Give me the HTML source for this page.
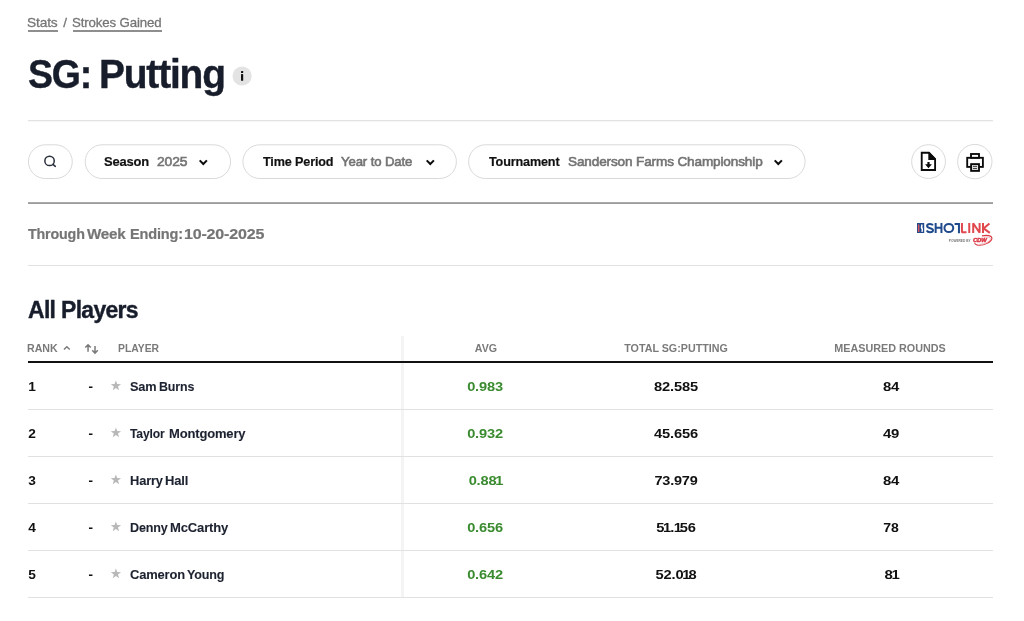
<!DOCTYPE html>
<html><head><meta charset="utf-8">
<style>
*{box-sizing:border-box;margin:0;padding:0}
html,body{width:1024px;height:621px;background:#fff;overflow:hidden}
body{font-family:"Liberation Sans",sans-serif;color:#0e1421;position:relative}
.abs{position:absolute;white-space:nowrap}
.t{position:absolute;white-space:nowrap}
.o{margin:0 -1.8px 0 -1px}.o2{margin:0 -.9px 0 -1px}.o3{margin:0 -1.8px 0 -.3px}
svg{position:absolute;overflow:visible}
.ul{position:absolute;height:2px;background:#8e8e8e;top:30px}
.hr{position:absolute;left:28px;width:964.7px;height:1px;background:#e2e2e3}
.pill{position:absolute;top:144px;height:35px;border:1px solid #d9d9d9;border-radius:18px;background:#fff}
.circ{position:absolute;top:144px;width:35.5px;height:35px;border:1px solid #d9d9d9;border-radius:50%}
.rl{position:absolute;left:28px;width:964.7px;height:1px;background:#e1e1e1}
</style></head><body><div style="position:absolute;left:0;top:0;width:1024px;height:621px;will-change:transform">




<svg style="left:232px;top:66px" width="20" height="20" viewBox="232 66 20 20"><circle cx="242.1" cy="76" r="9.6" fill="#e3e3e4"/><rect x="241" y="71.1" width="2.2" height="1.8" rx=".5" fill="#111"/><rect x="241" y="74.1" width="2.2" height="6.7" rx=".6" fill="#111"/></svg>
<div class="hr" style="top:120px"></div><div class="hr" style="top:121px;background:#f6f7f8"></div>

<svg style="left:20px;top:140px" width="800" height="45" viewBox="20 140 800 45"><g fill="#fff" stroke="#d9d9d9"><rect x="28.40" y="144.8" width="43.90" height="33.7" rx="16.85"/><rect x="85.20" y="144.8" width="145.40" height="33.7" rx="16.85"/><rect x="242.90" y="144.8" width="213.50" height="33.7" rx="16.85"/><rect x="468.60" y="144.8" width="336.50" height="33.7" rx="16.85"/></g></svg>
<svg style="left:40px;top:152px" width="20" height="20" viewBox="40 152 20 20"><circle cx="49.55" cy="160.9" r="4.7" fill="none" stroke="#2a2f3c" stroke-width="1.5"/><path d="M53 164.4L55.3 166.3" stroke="#2a2f3c" stroke-width="1.6" stroke-linecap="round"/></svg>

<svg style="left:196px;top:156px" width="14" height="12" viewBox="196 156 14 12"><path d="M199.7 160.4L203.3 164L206.9 160.4" fill="none" stroke="#0c0c0c" stroke-width="2"/></svg>

<svg style="left:422.5px;top:156px" width="14" height="12" viewBox="196 156 14 12"><path d="M199.7 160.4L203.3 164L206.9 160.4" fill="none" stroke="#0c0c0c" stroke-width="2"/></svg>

<svg style="left:771px;top:156px" width="14" height="12" viewBox="196 156 14 12"><path d="M199.7 160.4L203.3 164L206.9 160.4" fill="none" stroke="#0c0c0c" stroke-width="2"/></svg>

<svg style="left:905px;top:140px" width="95" height="45" viewBox="905 140 95 45"><circle cx="928.55" cy="161.6" r="16.9" fill="#fff" stroke="#d9d9d9"/><circle cx="974.8" cy="161.6" r="17.2" fill="#fff" stroke="#d9d9d9"/></svg>
<svg style="left:914px;top:147px" width="30" height="30" viewBox="914 147 30 30"><path d="M921.72 152.72H928.9L935.1 159.1V170H921.72Z" fill="#fff" stroke="#0a0a0a" stroke-width="1.85" stroke-linejoin="miter"/><path d="M928.3 152H929.3L936 158.8V160H928.3Z" fill="#0a0a0a"/><path d="M927.4 162H929.6V164.2H931.9L928.5 168.3L925.1 164.2H927.4Z" fill="#0a0a0a"/></svg>

<svg style="left:960px;top:148px" width="30" height="30" viewBox="960 148 30 30"><rect x="967.2" y="157.8" width="15.7" height="9.1" fill="#fff" stroke="#0a0a0a" stroke-width="1.85"/><rect x="971" y="154" width="8" height="3.8" fill="#fff" stroke="#0a0a0a" stroke-width="1.85"/><rect x="971.1" y="164.1" width="7.9" height="6.8" fill="#ddd" stroke="#0a0a0a" stroke-width="1.85"/><path d="M973 166.4H977M973 168.5H977" stroke="#333" stroke-width=".9"/></svg>

<div class="hr" style="top:202px;height:1px;background:#ababab"></div><div class="hr" style="top:203px;height:1px;background:#9b9b9b"></div>


<svg style="left:914px;top:218px" width="82" height="30" viewBox="914 218 82 30">
<rect x="917" y="223" width="7.2" height="10" fill="#1f4a8c"/><rect x="917.9" y="224.5" width="1.5" height="7.5" fill="#d9575d"/><path d="M921.3 224.3l1.4.4-.3 2.2.7 2.3-.4 2.8h-1.2l.1-2.6-.9-1.6z" fill="#fff"/>
<g fill="none" stroke="#1f4a8c" stroke-width="2">
<path d="M932.9 225.4C932.4 224.3 931.2 223.9 929.9 223.9C928.2 223.9 927.1 224.8 927.1 226.1C927.1 229 933 227.3 933 230.2C933 231.5 931.7 232.2 930 232.2C928.5 232.2 927.3 231.7 926.7 230.5"/>
<path d="M935.65 223V233M941.45 223V233M935.65 227.8H941.45"/>
<ellipse cx="948.85" cy="228" rx="4.4" ry="4.1"/>
<path d="M954.6 223.95H958.95V233.3"/>
</g>
<g fill="none" stroke="#e0484d" stroke-width="2" stroke-linejoin="bevel">
<path d="M961.95 223V232.3H966.5"/>
<path d="M969.25 223V233"/>
<path d="M973.2 233V223.3L979.6 232.7V223"/>
<path d="M983 223V233M989.4 223.4L983.6 228.4L989.8 232.9"/>
</g>
<text x="948.8" y="241.9" font-family="Liberation Sans, sans-serif" font-size="3.3" font-weight="bold" fill="#777" textLength="21.8" lengthAdjust="spacingAndGlyphs">POWERED BY</text>
<text x="972.9" y="242.2" font-family="Liberation Sans, sans-serif" font-size="5.8" font-weight="bold" font-style="italic" fill="#dc3a45" stroke="#dc3a45" stroke-width=".5" textLength="14" lengthAdjust="spacingAndGlyphs">CDW</text>
<path d="M982 235.9C987 234.8 992 235.5 991.9 238.4C991.7 241.8 984 246 978 245.2C975.6 244.8 974.6 243.6 974.8 242.6" fill="none" stroke="#dc3a45" stroke-width="1.1"/>
<path d="M984 237.2C987.5 236.6 990.6 237 990.3 239C989.8 241.6 984 244.4 979.5 244.2" fill="none" stroke="#e88990" stroke-width=".6"/>
</svg>
<div class="hr" style="top:265px"></div>




<svg style="left:62px;top:343px" width="10" height="10" viewBox="62 343 10 10"><path d="M64 349.6L66.85 346.7L69.7 349.6" fill="none" stroke="#7a7a7a" stroke-width="1.4"/></svg>
<svg style="left:84px;top:343px" width="16" height="12" viewBox="84 343 16 12"><path d="M88.05 351.8V345M85.3 347.5L88.05 344.7L90.8 347.5M95 345.9V352.8M92.2 350.3L95 353.1L97.8 350.3" fill="none" stroke="#7a7a7a" stroke-width="1.5"/></svg>




<div class="abs" style="left:400.5px;top:336px;width:3.5px;height:262px;background:#f4f4f5"></div>
<div class="hr" style="top:361px;height:2px;background:#111"></div>

<div class="ul" style="left:28px;width:30px"></div><div class="ul" style="left:72.6px;width:89.3px"></div>
<div class="rl" style="top:409px"></div><svg style="left:110px;top:379px" width="12" height="12" viewBox="0 0 12 12"><polygon points="5.90,1.50 7.19,5.12 11.04,5.23 7.99,7.58 9.07,11.27 5.90,9.10 2.73,11.27 3.81,7.58 0.76,5.23 4.61,5.12" fill="#b8b8b8"/></svg>
<div class="rl" style="top:456px"></div><svg style="left:110px;top:426px" width="12" height="12" viewBox="0 0 12 12"><polygon points="5.90,1.50 7.19,5.12 11.04,5.23 7.99,7.58 9.07,11.27 5.90,9.10 2.73,11.27 3.81,7.58 0.76,5.23 4.61,5.12" fill="#b8b8b8"/></svg>
<div class="rl" style="top:503px"></div><svg style="left:110px;top:473px" width="12" height="12" viewBox="0 0 12 12"><polygon points="5.90,1.50 7.19,5.12 11.04,5.23 7.99,7.58 9.07,11.27 5.90,9.10 2.73,11.27 3.81,7.58 0.76,5.23 4.61,5.12" fill="#b8b8b8"/></svg>
<div class="rl" style="top:550px"></div><svg style="left:110px;top:520px" width="12" height="12" viewBox="0 0 12 12"><polygon points="5.90,1.50 7.19,5.12 11.04,5.23 7.99,7.58 9.07,11.27 5.90,9.10 2.73,11.27 3.81,7.58 0.76,5.23 4.61,5.12" fill="#b8b8b8"/></svg>
<div class="rl" style="top:597px"></div><svg style="left:110px;top:567px" width="12" height="12" viewBox="0 0 12 12"><polygon points="5.90,1.50 7.19,5.12 11.04,5.23 7.99,7.58 9.07,11.27 5.90,9.10 2.73,11.27 3.81,7.58 0.76,5.23 4.61,5.12" fill="#b8b8b8"/></svg>
<span id="c1" class="t" style="left:27.03px;top:14.06px;font-size:13.4px;line-height:17px;letter-spacing:-.01em;-webkit-text-stroke:.3px #757575;color:#757575;transform-origin:0 0;transform:scaleX(1.0250);">Stats</span>
<span id="c2" class="t" style="left:63.20px;top:14.06px;font-size:13.4px;line-height:17px;letter-spacing:-.01em;-webkit-text-stroke:.3px #757575;color:#757575;">/</span>
<span id="c3" class="t" style="left:72.12px;top:14.06px;font-size:13.4px;line-height:17px;letter-spacing:-.01em;-webkit-text-stroke:.3px #757575;color:#757575;transform-origin:0 0;transform:scaleX(0.9896);">Strokes Gained</span>
<span id="title" class="t" style="left:27.62px;top:49.00px;font-size:40px;line-height:50px;font-weight:bold;letter-spacing:-.03em;-webkit-text-stroke:.4px #181d2b;color:#181d2b;transform-origin:0 0;transform:scaleX(0.9356);">SG:</span>
<span id="title2" class="t" style="left:98.66px;top:49.00px;font-size:40px;line-height:50px;font-weight:bold;letter-spacing:-.03em;-webkit-text-stroke:.4px #181d2b;color:#181d2b;transform-origin:0 0;transform:scaleX(0.9723);">Putting</span>
<span id="p1" class="t" style="left:104.05px;top:153.00px;font-size:13.6px;line-height:17px;font-weight:bold;letter-spacing:-.012em;-webkit-text-stroke:.2px #111;color:#111;transform-origin:0 0;transform:scaleX(0.9517);">Season</span>
<span id="p2" class="t" style="left:156.76px;top:153.07px;font-size:13.6px;line-height:17px;letter-spacing:-.01em;-webkit-text-stroke:.6px #737373;color:#737373;transform-origin:0 0;transform:scaleX(1.0208);">2025</span>
<span id="p3" class="t" style="left:263.19px;top:153.00px;font-size:13.6px;line-height:17px;font-weight:bold;letter-spacing:-.012em;-webkit-text-stroke:.2px #111;color:#111;transform-origin:0 0;transform:scaleX(0.9289);">Time Period</span>
<span id="p4" class="t" style="left:341.43px;top:153.07px;font-size:13.6px;line-height:17px;letter-spacing:-.01em;-webkit-text-stroke:.6px #737373;color:#737373;transform-origin:0 0;transform:scaleX(0.9707);">Year to Date</span>
<span id="p5" class="t" style="left:488.78px;top:153.00px;font-size:13.6px;line-height:17px;font-weight:bold;letter-spacing:-.012em;-webkit-text-stroke:.2px #111;color:#111;transform-origin:0 0;transform:scaleX(0.9279);">Tournament</span>
<span id="p6" class="t" style="left:567.54px;top:153.07px;font-size:13.6px;line-height:17px;letter-spacing:-.01em;-webkit-text-stroke:.6px #737373;color:#737373;transform-origin:0 0;transform:scaleX(0.9981);">Sanderson Farms Championship</span>
<span id="tw1" class="t" style="left:27.55px;top:225.00px;font-size:14.5px;line-height:18px;font-weight:bold;letter-spacing:-.012em;-webkit-text-stroke:.2px #757575;color:#757575;transform-origin:0 0;transform:scaleX(0.9847);">Through</span>
<span id="tw2" class="t" style="left:87.33px;top:225.00px;font-size:14.5px;line-height:18px;font-weight:bold;letter-spacing:-.012em;-webkit-text-stroke:.2px #757575;color:#757575;transform-origin:0 0;transform:scaleX(1.0456);">Week</span>
<span id="tw3" class="t" style="left:129.77px;top:225.00px;font-size:14.5px;line-height:18px;font-weight:bold;letter-spacing:-.012em;-webkit-text-stroke:.2px #757575;color:#757575;transform-origin:0 0;transform:scaleX(1.0015);">Ending:</span>
<span id="tw4" class="t" style="left:184.22px;top:225.00px;font-size:14.5px;line-height:18px;font-weight:bold;letter-spacing:-.012em;-webkit-text-stroke:.2px #757575;color:#757575;transform-origin:0 0;transform:scaleX(1.1071);">10-20-2025</span>
<span id="ap" class="t" style="left:27.76px;top:295.00px;font-size:24px;line-height:30px;font-weight:bold;letter-spacing:-.03em;-webkit-text-stroke:.4px #181d2b;color:#181d2b;transform-origin:0 0;transform:scaleX(0.9575);">All Players</span>
<span id="h1" class="t" style="left:27.46px;top:342.00px;font-size:10.5px;line-height:13px;font-weight:bold;color:#7a7a7a;transform-origin:0 0;transform:scaleX(1.0128);">RANK</span>
<span id="h2" class="t" style="left:118.46px;top:342.00px;font-size:10.5px;line-height:13px;font-weight:bold;color:#7a7a7a;transform-origin:0 0;transform:scaleX(0.9870);">PLAYER</span>
<span id="h3" class="t" style="left:485.54px;top:342.00px;font-size:10.5px;line-height:13px;font-weight:bold;color:#7a7a7a;transform:translateX(-50%) scaleX(1.0133);">AVG</span>
<span id="h4" class="t" style="left:676.09px;top:342.00px;font-size:10.5px;line-height:13px;font-weight:bold;color:#7a7a7a;transform:translateX(-50%) scaleX(1.0202);">TOTAL SG:PUTTING</span>
<span id="h5" class="t" style="left:890.29px;top:342.00px;font-size:10.5px;line-height:13px;font-weight:bold;color:#7a7a7a;transform:translateX(-50%) scaleX(1.0269);">MEASURED ROUNDS</span>
<span id="n0_0" class="t" style="left:129.79px;top:378.00px;font-size:13.3px;line-height:17px;font-weight:bold;letter-spacing:-.012em;-webkit-text-stroke:.1px #1d2230;color:#1d2230;transform-origin:0 0;transform:scaleX(0.9585);">Sam</span>
<span id="n0_1" class="t" style="left:159.14px;top:378.00px;font-size:13.3px;line-height:17px;font-weight:bold;letter-spacing:-.012em;-webkit-text-stroke:.1px #1d2230;color:#1d2230;transform-origin:0 0;transform:scaleX(0.9348);">Burns</span>
<span id="r0" class="t" style="left:28.20px;top:378.00px;font-size:13.7px;line-height:17px;font-weight:bold;letter-spacing:-.012em;color:#111;">1</span>
<span id="d0" class="t" style="left:88.40px;top:378.00px;font-size:13.3px;line-height:17px;font-weight:bold;letter-spacing:-.012em;-webkit-text-stroke:.1px #111;color:#111;">-</span>
<span id="a0" class="t" style="left:485.45px;top:378.00px;font-size:13.7px;line-height:17px;font-weight:bold;letter-spacing:-.012em;color:#3a8b2f;transform:translateX(-50%) scaleX(1.0680);">0.983</span>
<span id="t0" class="t" style="left:675.80px;top:378.00px;font-size:13.7px;line-height:17px;font-weight:bold;letter-spacing:-.012em;color:#111;transform:translateX(-50%) scaleX(1.0730);">82.585</span>
<span id="m0" class="t" style="left:890.80px;top:378.00px;font-size:13.7px;line-height:17px;font-weight:bold;letter-spacing:-.012em;color:#111;transform:translateX(-50%) scaleX(1.0900);">84</span>
<span id="n1_0" class="t" style="left:129.97px;top:425.00px;font-size:13.3px;line-height:17px;font-weight:bold;letter-spacing:-.012em;-webkit-text-stroke:.1px #1d2230;color:#1d2230;transform-origin:0 0;transform:scaleX(0.9109);">Taylor</span>
<span id="n1_1" class="t" style="left:168.63px;top:425.00px;font-size:13.3px;line-height:17px;font-weight:bold;letter-spacing:-.012em;-webkit-text-stroke:.1px #1d2230;color:#1d2230;transform-origin:0 0;transform:scaleX(0.9772);">Montgomery</span>
<span id="r1" class="t" style="left:28.20px;top:425.00px;font-size:13.7px;line-height:17px;font-weight:bold;letter-spacing:-.012em;color:#111;">2</span>
<span id="d1" class="t" style="left:88.40px;top:425.00px;font-size:13.3px;line-height:17px;font-weight:bold;letter-spacing:-.012em;-webkit-text-stroke:.1px #111;color:#111;">-</span>
<span id="a1" class="t" style="left:485.45px;top:425.00px;font-size:13.7px;line-height:17px;font-weight:bold;letter-spacing:-.012em;color:#3a8b2f;transform:translateX(-50%) scaleX(1.0680);">0.932</span>
<span id="t1" class="t" style="left:675.80px;top:425.00px;font-size:13.7px;line-height:17px;font-weight:bold;letter-spacing:-.012em;color:#111;transform:translateX(-50%) scaleX(1.0730);">45.656</span>
<span id="m1" class="t" style="left:890.80px;top:425.00px;font-size:13.7px;line-height:17px;font-weight:bold;letter-spacing:-.012em;color:#111;transform:translateX(-50%) scaleX(1.0900);">49</span>
<span id="n2_0" class="t" style="left:129.65px;top:472.00px;font-size:13.3px;line-height:17px;font-weight:bold;letter-spacing:-.012em;-webkit-text-stroke:.1px #1d2230;color:#1d2230;transform-origin:0 0;transform:scaleX(0.9669);">Harry</span>
<span id="n2_1" class="t" style="left:165.23px;top:472.00px;font-size:13.3px;line-height:17px;font-weight:bold;letter-spacing:-.012em;-webkit-text-stroke:.1px #1d2230;color:#1d2230;transform-origin:0 0;transform:scaleX(0.9779);">Hall</span>
<span id="r2" class="t" style="left:28.20px;top:472.00px;font-size:13.7px;line-height:17px;font-weight:bold;letter-spacing:-.012em;color:#111;">3</span>
<span id="d2" class="t" style="left:88.40px;top:472.00px;font-size:13.3px;line-height:17px;font-weight:bold;letter-spacing:-.012em;-webkit-text-stroke:.1px #111;color:#111;">-</span>
<span id="a2" class="t" style="left:485.45px;top:472.00px;font-size:13.7px;line-height:17px;font-weight:bold;letter-spacing:-.012em;color:#3a8b2f;transform:translateX(-50%) scaleX(1.0680);">0.88<span class="o">1</span></span>
<span id="t2" class="t" style="left:675.80px;top:472.00px;font-size:13.7px;line-height:17px;font-weight:bold;letter-spacing:-.012em;color:#111;transform:translateX(-50%) scaleX(1.0569);">73.979</span>
<span id="m2" class="t" style="left:890.80px;top:472.00px;font-size:13.7px;line-height:17px;font-weight:bold;letter-spacing:-.012em;color:#111;transform:translateX(-50%) scaleX(1.0900);">84</span>
<span id="n3_0" class="t" style="left:129.69px;top:519.00px;font-size:13.3px;line-height:17px;font-weight:bold;letter-spacing:-.012em;-webkit-text-stroke:.1px #1d2230;color:#1d2230;transform-origin:0 0;transform:scaleX(0.9445);">Denny</span>
<span id="n3_1" class="t" style="left:170.41px;top:519.00px;font-size:13.3px;line-height:17px;font-weight:bold;letter-spacing:-.012em;-webkit-text-stroke:.1px #1d2230;color:#1d2230;transform-origin:0 0;transform:scaleX(0.9802);">McCarthy</span>
<span id="r3" class="t" style="left:28.20px;top:519.00px;font-size:13.7px;line-height:17px;font-weight:bold;letter-spacing:-.012em;color:#111;">4</span>
<span id="d3" class="t" style="left:88.40px;top:519.00px;font-size:13.3px;line-height:17px;font-weight:bold;letter-spacing:-.012em;-webkit-text-stroke:.1px #111;color:#111;">-</span>
<span id="a3" class="t" style="left:485.45px;top:519.00px;font-size:13.7px;line-height:17px;font-weight:bold;letter-spacing:-.012em;color:#3a8b2f;transform:translateX(-50%) scaleX(1.0680);">0.656</span>
<span id="t3" class="t" style="left:675.80px;top:519.00px;font-size:13.7px;line-height:17px;font-weight:bold;letter-spacing:-.012em;color:#111;transform:translateX(-50%) scaleX(1.0730);">5<span class="o2">1</span>.<span class="o3">1</span>56</span>
<span id="m3" class="t" style="left:890.80px;top:519.00px;font-size:13.7px;line-height:17px;font-weight:bold;letter-spacing:-.012em;color:#111;transform:translateX(-50%) scaleX(1.0246);">78</span>
<span id="n4_0" class="t" style="left:129.59px;top:566.00px;font-size:13.3px;line-height:17px;font-weight:bold;letter-spacing:-.012em;-webkit-text-stroke:.1px #1d2230;color:#1d2230;transform-origin:0 0;transform:scaleX(0.9731);">Cameron</span>
<span id="n4_1" class="t" style="left:187.15px;top:566.00px;font-size:13.3px;line-height:17px;font-weight:bold;letter-spacing:-.012em;-webkit-text-stroke:.1px #1d2230;color:#1d2230;transform-origin:0 0;transform:scaleX(0.9441);">Young</span>
<span id="r4" class="t" style="left:28.20px;top:566.00px;font-size:13.7px;line-height:17px;font-weight:bold;letter-spacing:-.012em;color:#111;">5</span>
<span id="d4" class="t" style="left:88.40px;top:566.00px;font-size:13.3px;line-height:17px;font-weight:bold;letter-spacing:-.012em;-webkit-text-stroke:.1px #111;color:#111;">-</span>
<span id="a4" class="t" style="left:485.45px;top:566.00px;font-size:13.7px;line-height:17px;font-weight:bold;letter-spacing:-.012em;color:#3a8b2f;transform:translateX(-50%) scaleX(1.0680);">0.642</span>
<span id="t4" class="t" style="left:675.80px;top:566.00px;font-size:13.7px;line-height:17px;font-weight:bold;letter-spacing:-.012em;color:#111;transform:translateX(-50%) scaleX(1.0730);">52.0<span class="o">1</span>8</span>
<span id="m4" class="t" style="left:890.80px;top:566.00px;font-size:13.7px;line-height:17px;font-weight:bold;letter-spacing:-.012em;color:#111;transform:translateX(-50%) scaleX(1.0900);">8<span class="o">1</span></span>
</div></body></html>
